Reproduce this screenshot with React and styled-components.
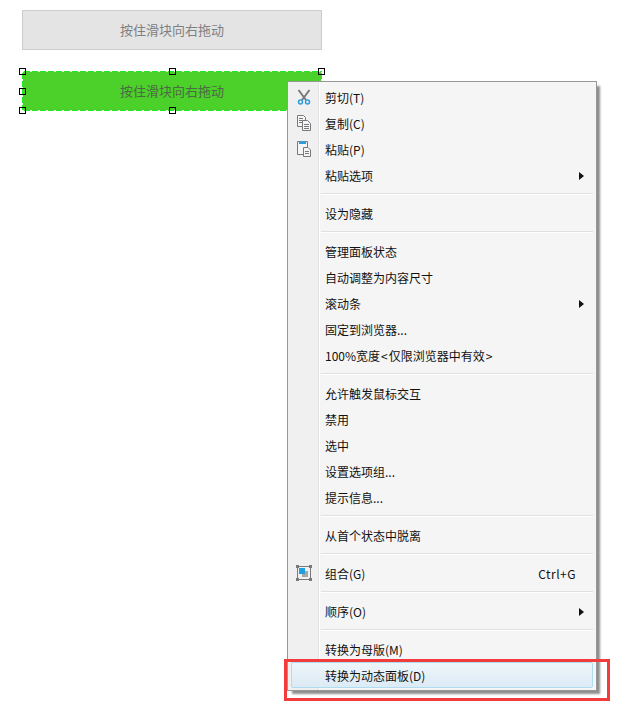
import React from "react";
import styled, { createGlobalStyle } from "styled-components";

const Bracket = styled.span`
  padding: 0 1px;
`;

const menuRows = [
  { label: "剪切(T)", icon: "cut" },
  { label: "复制(C)", icon: "copy" },
  { label: "粘贴(P)", icon: "paste" },
  { label: "粘贴选项", arrow: true },
  { divider: true },
  { label: "设为隐藏" },
  { divider: true },
  { label: "管理面板状态" },
  { label: "自动调整为内容尺寸" },
  { label: "滚动条", arrow: true },
  { label: "固定到浏览器..." },
  {
    label: (
      <>
        100%宽度<Bracket>&lt;</Bracket>仅限浏览器中有效<Bracket>&gt;</Bracket>
      </>
    ),
  },
  { divider: true },
  { label: "允许触发鼠标交互" },
  { label: "禁用" },
  { label: "选中" },
  { label: "设置选项组..." },
  { label: "提示信息..." },
  { divider: true },
  { label: "从首个状态中脱离" },
  { divider: true },
  { label: "组合(G)", icon: "group", shortcut: "Ctrl+G" },
  { divider: true },
  { label: "顺序(O)", arrow: true },
  { divider: true },
  { label: "转换为母版(M)" },
  { label: "转换为动态面板(D)", active: true },
];

const CutIcon = () => (
  <svg width="16" height="16" viewBox="0 0 16 16" fill="none">
    <path d="M2.5 1 L10 11 M13.5 1 L6 11" stroke="#77797c" strokeWidth="2" />
    <circle cx="4.5" cy="13" r="2" stroke="#2f9ed8" strokeWidth="1.5" />
    <circle cx="11.5" cy="13" r="2" stroke="#2f9ed8" strokeWidth="1.5" />
  </svg>
);

const CopyIcon = () => (
  <svg width="16" height="16" viewBox="0 0 16 16" fill="none" stroke="#77797c">
    <path d="M1.5 0.5 H7.5 L9.5 2.5 V11.5 H1.5 Z" fill="#f5f5f5" />
    <path d="M3 3.5 H7 M3 5.5 H8 M3 7.5 H8" />
    <path d="M6.5 5.5 H11.5 L14.5 8.5 V15.5 H6.5 Z" fill="#f5f5f5" />
    <path d="M8 9.5 H13 M8 11.5 H13 M8 13.5 H13" />
  </svg>
);

const PasteIcon = () => (
  <svg width="16" height="16" viewBox="0 0 16 16" fill="none" stroke="#77797c">
    <path d="M1.5 0.5 H11.5 V13.5 H1.5 Z" fill="#f5f5f5" />
    <path d="M3 0 H10 V3 H3 Z" fill="#2f9ed8" stroke="none" />
    <path d="M7.5 6.5 H12 L14.5 9 V15.5 H7.5 Z" fill="#f5f5f5" />
    <path d="M9 10.5 H13 M9 12.5 H13" />
  </svg>
);

const GroupIcon = () => (
  <svg width="16" height="16" viewBox="0 0 16 16" fill="none">
    <rect x="1.5" y="1.5" width="13" height="13" stroke="#77797c" />
    <rect x="0" y="0" width="3" height="3" fill="#77797c" />
    <rect x="13" y="0" width="3" height="3" fill="#77797c" />
    <rect x="0" y="13" width="3" height="3" fill="#77797c" />
    <rect x="13" y="13" width="3" height="3" fill="#77797c" />
    <rect x="6" y="6" width="6" height="6" fill="#a6a6a6" />
    <rect x="3" y="3" width="6" height="6" fill="#1f9fe0" />
  </svg>
);

const icons = { cut: CutIcon, copy: CopyIcon, paste: PasteIcon, group: GroupIcon };

const App = () => {
  return (
    <>
      <GlobalStyle />
      <Page>
        <Slider>按住滑块向右拖动</Slider>
        <SelectedSlider>
          按住滑块向右拖动
          <Handle x="left" y="top" />
          <Handle x="middle" y="top" />
          <Handle x="right" y="top" />
          <Handle x="left" y="middle" />
          <Handle x="left" y="bottom" />
          <Handle x="middle" y="bottom" />
        </SelectedSlider>
        <Menu>
          {menuRows.map((row, i) => {
            if (row.divider) return <Divider key={i} />;
            const Icon = icons[row.icon];
            return (
              <Row key={i} $active={row.active}>
                <IconCell>{Icon && <Icon />}</IconCell>
                <Label>{row.label}</Label>
                {row.shortcut && <Shortcut>{row.shortcut}</Shortcut>}
                {row.arrow && <Arrow />}
              </Row>
            );
          })}
        </Menu>
        <Callout />
      </Page>
    </>
  );
};

export default App;

const GlobalStyle = createGlobalStyle`
  html, body {
    margin: 0;
    padding: 0;
    background: #fff;
  }
  body {
    font-family: "Noto Sans CJK SC", "Liberation Sans", sans-serif;
  }
`;

const Page = styled.div`
  position: relative;
  width: 629px;
  height: 712px;
  overflow: hidden;
  box-sizing: border-box;
  padding: 10px 0 0 22px;
  display: flex;
  flex-direction: column;
  gap: 21px;
`;

const Slider = styled.div`
  position: relative;
  box-sizing: border-box;
  width: 300px;
  height: 40px;
  padding-bottom: 2px;
  display: flex;
  align-items: center;
  justify-content: center;
  font-size: 13px;
  color: #7f7f7f;
  background: #e4e4e4;
  border: 1px solid #cccccc;
`;

const SelectedSlider = styled(Slider)`
  color: #4d6a45;
  border: none;
  background:
    repeating-linear-gradient(90deg, #e4f8de 0 2px, #22e822 2px 8px) top / 100% 1px no-repeat,
    repeating-linear-gradient(90deg, #e4f8de 0 2px, #22e822 2px 8px) bottom / 100% 1px no-repeat,
    repeating-linear-gradient(180deg, #e4f8de 0 2px, #22e822 2px 8px) left / 1px 100% no-repeat,
    repeating-linear-gradient(180deg, #e4f8de 0 2px, #22e822 2px 8px) right / 1px 100% no-repeat,
    #4bd12a;
`;

const handleX = { left: "-3px", middle: "147px", right: "296px" };
const handleY = { top: "-3px", middle: "17px", bottom: "36px" };

const Handle = styled.span`
  position: absolute;
  box-sizing: border-box;
  width: 7px;
  height: 7px;
  left: ${(props) => handleX[props.x]};
  top: ${(props) => handleY[props.y]};
  border: 1px solid #000;
`;

const Menu = styled.div`
  position: absolute;
  left: 287px;
  top: 81px;
  box-sizing: border-box;
  width: 310px;
  height: 610px;
  padding: 2px 3px;
  border: 1px solid #979797;
  background: linear-gradient(
    to right,
    #f0f0f0 0 30px,
    #e2e3e3 30px 31px,
    #ffffff 31px 32px,
    #f5f5f5 32px
  );
  box-shadow: 4px 4px 2px -1px #8e8e8e;
`;

const Row = styled.div`
  box-sizing: border-box;
  height: 26px;
  display: flex;
  align-items: center;
  padding-top: 2px;
  font-size: 12px;
  line-height: 16px;
  color: #111;
  border: 1px solid ${(props) => (props.$active ? "#aedcf0" : "transparent")};
  border-radius: 2px;
  background: ${(props) =>
    props.$active
      ? "linear-gradient(to bottom, rgba(236,246,251,.85), rgba(216,233,245,.85))"
      : "transparent"};
`;

const IconCell = styled.span`
  width: 23px;
  height: 16px;
  margin-top: -2px;
  display: flex;
  justify-content: center;
  flex-shrink: 0;
`;

const Label = styled.span`
  margin-left: 10px;
  flex: 1;
  white-space: nowrap;
`;

const Shortcut = styled.span`
  margin-right: 16px;
  letter-spacing: 0.5px;
`;

const Arrow = styled.span`
  width: 0;
  height: 0;
  margin-right: 8px;
  border-left: 5px solid #111;
  border-top: 4px solid transparent;
  border-bottom: 4px solid transparent;
`;

const Divider = styled.div`
  height: 2px;
  margin: 5px 0 5px 30px;
  background: linear-gradient(to bottom, #e0e0e0 0 1px, #ffffff 1px);
`;

const Callout = styled.div`
  position: absolute;
  left: 284px;
  top: 659px;
  box-sizing: border-box;
  width: 326px;
  height: 42px;
  border: 3px solid #f23c3c;
`;
